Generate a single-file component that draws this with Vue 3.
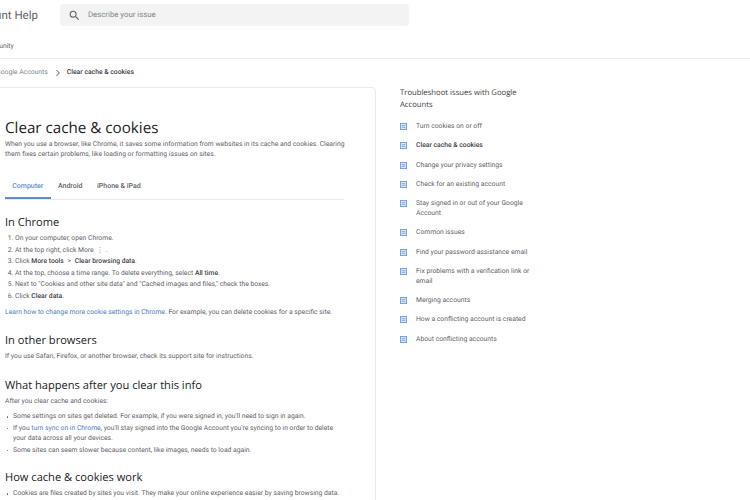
<template>
  <div class="viewport">
    <div class="page">
      <header class="top">
        <div class="top-row">
          <div class="brand">Account Help</div>
          <div class="search">
            <svg class="search-icon" viewBox="0 0 24 24"><path d="M15.5 14h-.79l-.28-.27A6.47 6.47 0 0 0 16 9.5 6.5 6.5 0 1 0 9.5 16c1.61 0 3.09-.59 4.23-1.57l.27.28v.79l5 4.99L20.49 19l-4.99-5zm-6 0C7.01 14 5 11.99 5 9.5S7.01 5 9.5 5 14 7.01 14 9.5 11.99 14 9.5 14z"/></svg>
            <span>Describe your issue</span>
          </div>
        </div>
        <div class="nav-row">Community</div>
      </header>

      <div class="crumbs">
        <span class="crumb-link">Google Accounts</span>
        <svg class="crumb-sep" viewBox="0 0 8 8"><path d="M2.4 1l3 3-3 3" fill="none" stroke="#5f6368" stroke-width="1"/></svg>
        <span class="crumb-here">Clear cache &amp; cookies</span>
      </div>

      <div class="columns">
        <main class="card">
          <h1>Clear cache &amp; cookies</h1>
          <p class="intro">When you use a browser, like Chrome, it saves some information from websites in its cache and cookies. Clearing them fixes certain problems, like loading or formatting issues on sites.</p>

          <div class="tabs">
            <span v-for="(tab, i) in tabs" :key="tab" class="tab" :class="{ active: i === 0 }">{{ tab }}</span>
          </div>

          <h2 class="first">In Chrome</h2>
          <ol>
            <li>On your computer, open Chrome.</li>
            <li>At the top right, click More <span class="dots">⋮</span> .</li>
            <li>Click <b>More tools</b> <span class="gt">&gt;</span> <b>Clear browsing data</b>.</li>
            <li>At the top, choose a time range. To delete everything, select <b>All time</b>.</li>
            <li>Next to "Cookies and other site data" and "Cached images and files," check the boxes.</li>
            <li>Click <b>Clear data</b>.</li>
          </ol>
          <p class="after-list"><a>Learn how to change more cookie settings in Chrome.</a> For example, you can delete cookies for a specific site.</p>

          <h2>In other browsers</h2>
          <p>If you use Safari, Firefox, or another browser, check its support site for instructions.</p>

          <h2 class="after-clear">What happens after you clear this info</h2>
          <p>After you clear cache and cookies:</p>
          <ul>
            <li>Some settings on sites get deleted. For example, if you were signed in, you'll need to sign in again.</li>
            <li>If you <a>turn sync on in Chrome</a>, you'll stay signed into the Google Account you're syncing to in order to delete your data across all your devices.</li>
            <li>Some sites can seem slower because content, like images, needs to load again.</li>
          </ul>

          <h2>How cache &amp; cookies work</h2>
          <ul>
            <li>Cookies are files created by sites you visit. They make your online experience easier by saving browsing data.</li>
          </ul>
        </main>

        <aside class="side">
          <h3>Troubleshoot issues with Google Accounts</h3>
          <div v-for="item in links" :key="item" class="side-item" :class="{ current: item === current }">
            <svg class="doc" viewBox="0 0 8 8">
              <rect width="8" height="8" fill="#6d9be3"/>
              <rect x="1" y="1" width="6" height="6" fill="#dbe7f9"/>
              <path d="M2 3h4M2 5h4" stroke="#6d9be3" stroke-width=".9"/>
            </svg>
            <span>{{ item }}</span>
          </div>
        </aside>
      </div>
    </div>
  </div>
</template>

<script setup>
const tabs = ['Computer', 'Android', 'iPhone & iPad']
const current = 'Clear cache & cookies'
const links = [
  'Turn cookies on or off',
  'Clear cache & cookies',
  'Change your privacy settings',
  'Check for an existing account',
  'Stay signed in or out of your Google Account',
  'Common issues',
  'Find your password-assistance email',
  'Fix problems with a verification link or email',
  'Merging accounts',
  'How a conflicting account is created',
  'About conflicting accounts'
]
</script>

<style>
html, body {
  overflow: hidden;
  background: #fff;
}
</style>

<style scoped>
.viewport {
  width: 750px;
  height: 500px;
  overflow: hidden;
  font-family: Roboto, "Liberation Sans", sans-serif;
  font-size: 6.77px;
  line-height: 9.8px;
  color: #5f6368;
  text-rendering: geometricPrecision;
}

.page {
  width: 790px;
  margin-left: -40px;
}

.top {
  height: 59px;
  box-sizing: border-box;
  border-bottom: 1px solid #e8eaed;
}

.top-row {
  display: flex;
  align-items: center;
  padding-top: 4px;
  height: 22px;
}

.brand {
  width: 100px;
  padding: 1px 0 0 9px;
  box-sizing: border-box;
  font-size: 11.5px;
  color: #5f6368;
  white-space: nowrap;
}

.search {
  width: 349px;
  height: 22px;
  display: flex;
  align-items: center;
  gap: 7px;
  padding-left: 8px;
  box-sizing: border-box;
  background: #f1f3f4;
  border-radius: 4px;
  color: #80868b;
  font-size: 7.8px;
}

.search-icon {
  width: 13px;
  height: 13px;
  fill: #5f6368;
}

.nav-row {
  margin-top: 16px;
  padding-left: 19px;
  font-size: 6.8px;
  color: #5f6368;
}

.crumbs {
  display: flex;
  align-items: center;
  height: 28px;
  padding-left: 36px;
  font-size: 6.8px;
}

.crumb-link {
  color: #80868b;
}

.crumb-sep {
  width: 8px;
  height: 8px;
  margin: 0 5px 0 6px;
}

.crumb-here {
  color: #3c4043;
  font-weight: 500;
}

.columns {
  display: flex;
}

.card {
  width: 396px;
  height: 500px;
  margin-left: 20px;
  padding: 29.5px 30px 0 24px;
  box-sizing: border-box;
  border: 1px solid #e8eaed;
  border-radius: 4px;
}

h1 {
  margin: 0 0 2.6px;
  font-family: "Open Sans", sans-serif;
  font-weight: 400;
  font-size: 15.2px;
  line-height: 20px;
  color: #202124;
}

p {
  margin: 0;
}

.tabs {
  display: flex;
  height: 29px;
  margin: 10.5px 1px 0 0;
  border-bottom: 1px solid #e8eaed;
}

.tab {
  padding: 12px 7.3px 0;
  font-size: 7px;
  color: #5f6368;
  font-weight: 500;
}

.tab.active {
  color: #5b8fc9;
  border-bottom: 2px solid #5b8fc9;
  height: 29px;
  box-sizing: border-box;
  margin-bottom: -1px;
}

h2 {
  margin: 15px 0 3px;
  font-family: "Open Sans", sans-serif;
  font-weight: 400;
  font-size: 11.1px;
  line-height: 16px;
  color: #202124;
}

h2.after-clear {
  margin: 16.5px 0 3.5px;
}

ol, ul {
  margin: 0;
  padding: 0 0 0 10px;
}

ul {
  margin-top: 5px;
  padding-left: 8px;
  list-style: none;
}

h2 + ul {
  margin-top: 2px;
}

ol li {
  margin-bottom: 1.75px;
}

ul li {
  position: relative;
  margin-bottom: 2px;
}

ul li::before {
  content: "";
  position: absolute;
  left: -6px;
  top: 4px;
  width: 1.4px;
  height: 1.4px;
  border-radius: 50%;
  background: #5f6368;
}

.after-list {
  margin-top: 6px;
}

a {
  color: #4a7cc4;
}

b {
  font-weight: 500;
  color: #3c4043;
}

.dots {
  margin: 0 1px;
}

.gt {
  margin: 0 2px;
}

.side {
  width: 135px;
  margin-left: 24px;
}

h3 {
  margin: 0 0 11px;
  font-family: "Open Sans", sans-serif;
  font-size: 7.7px;
  font-weight: 400;
  line-height: 12px;
  color: #3c4043;
}

.side-item {
  display: flex;
  gap: 9px;
  margin-bottom: 9.5px;
  color: #5f6368;
}

.side-item.current {
  color: #3c4043;
  font-weight: 500;
}

.doc {
  flex: none;
  width: 7px;
  height: 7px;
  margin-top: 1px;
}
</style>
